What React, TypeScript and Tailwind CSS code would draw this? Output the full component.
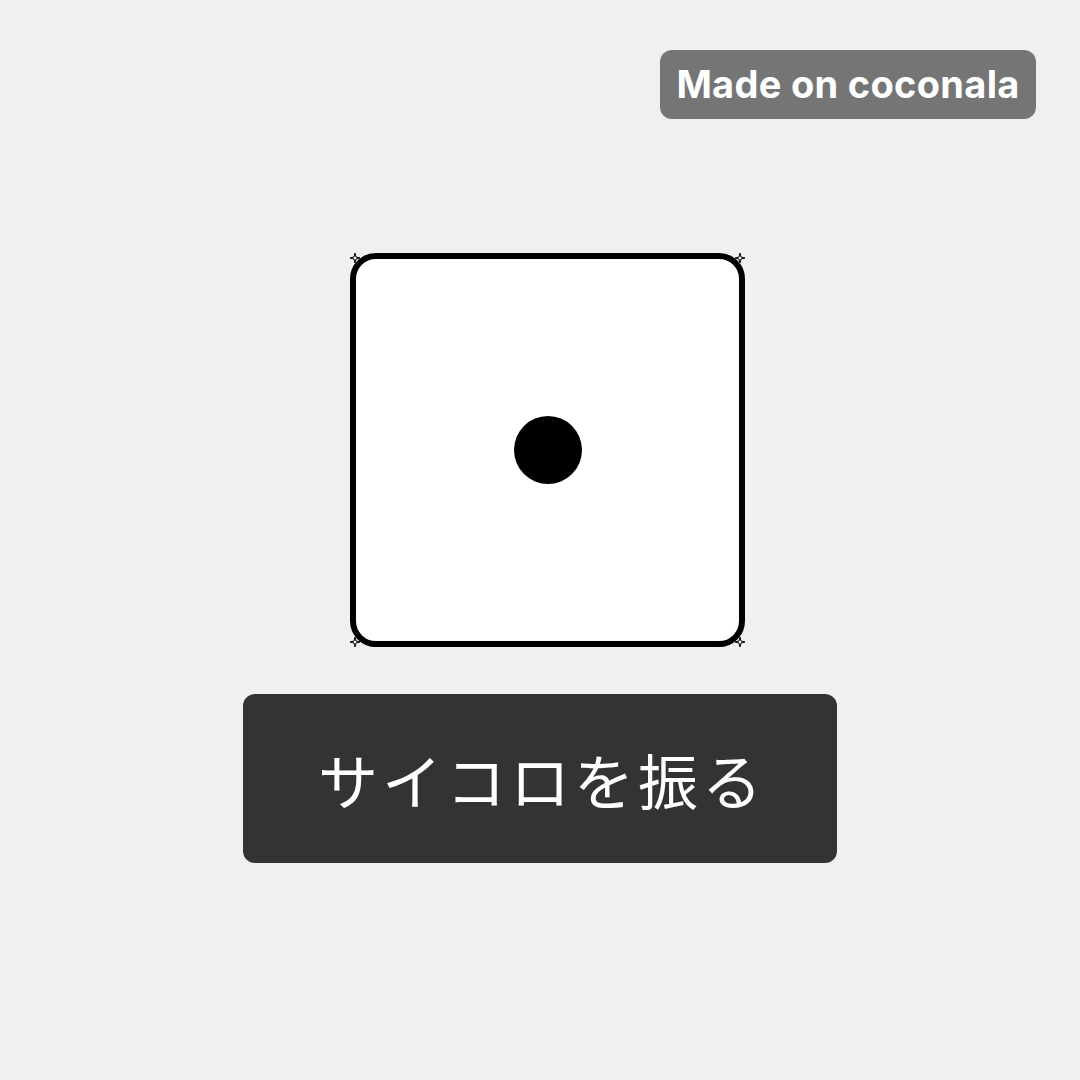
import { useState } from 'react'

function CornerStar({ className }: { className: string }) {
  return (
    <svg viewBox="0 0 10 10" className={`absolute h-[10px] w-[10px] ${className}`}>
      <path d="M5 0 L6 4 L10 5 L6 6 L5 10 L4 6 L0 5 L4 4 Z" fill="none" stroke="#000" strokeWidth="1" />
    </svg>
  )
}

export default function App() {
  const [face, setFace] = useState(1)

  function roll() {
    setFace(1 + Math.floor(Math.random() * 6))
  }

  return (
    <div className="w-[1080px] h-[1080px] bg-[#f0f0f0] flex flex-col" style={{ fontFamily: 'Inter, "Noto Sans CJK JP", sans-serif' }}>
      {/* Badge */}
      <div className="flex justify-end pt-[50px] pr-[44px]">
        <div className="h-[69px] w-[376px] rounded-[12px] bg-[#757575] flex items-center justify-center text-white text-[38px] font-bold tracking-[0.3px]">
          Made on coconala
        </div>
      </div>

      {/* Dice */}
      <div className="flex justify-center pl-[15px] mt-[134px]">
        <div className="relative">
          <div className="w-[395px] h-[394px] bg-white border-[6px] border-black rounded-[26px] flex items-center justify-center">
            {face === 1 && <div className="w-[68px] h-[68px] rounded-full bg-black" />}
            {face !== 1 && <span className="text-[60px] font-bold">{face}</span>}
          </div>
          <CornerStar className="left-[0px] top-[0px]" />
          <CornerStar className="right-[0px] top-[0px]" />
          <CornerStar className="left-[0px] bottom-[0px]" />
          <CornerStar className="right-[0px] bottom-[0px]" />
        </div>
      </div>

      {/* Button */}
      <div className="flex justify-center mt-[47px]">
        <button
          onClick={roll}
          className="w-[594px] h-[169px] rounded-[12px] bg-[#333333] text-white text-[60px] tracking-[4px] pl-[4px] flex items-center justify-center"
          style={{ fontFamily: '"Noto Sans CJK JP", sans-serif' }}
        >
          サイコロを振る
        </button>
      </div>
    </div>
  )
}
